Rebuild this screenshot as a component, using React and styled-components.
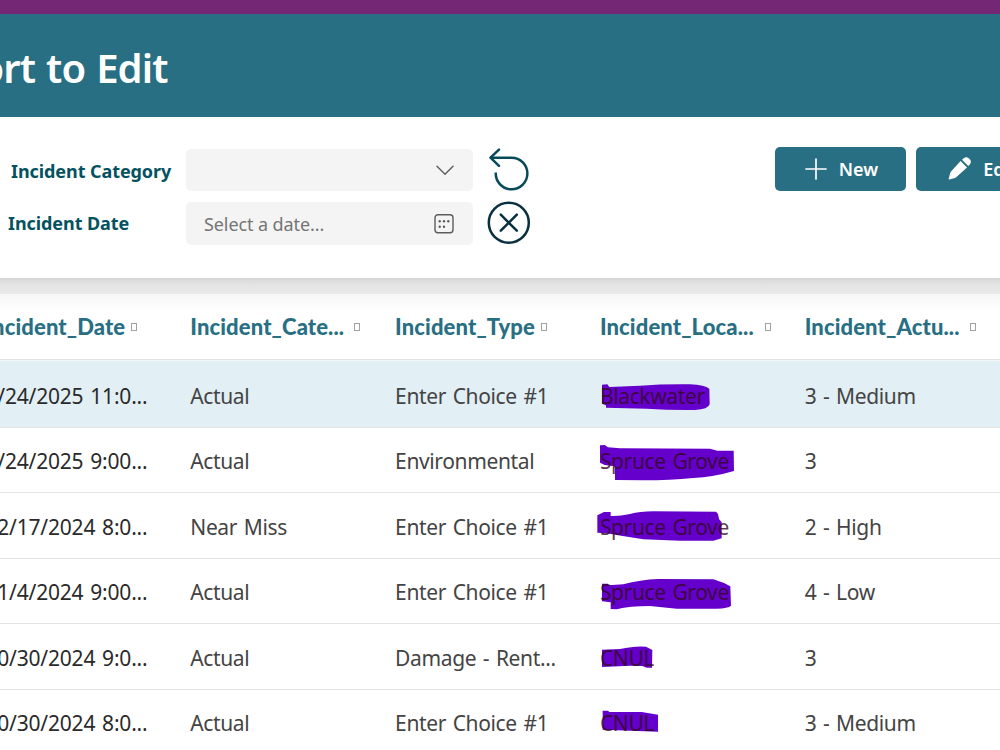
import React, { useState } from 'react';
import styled, { createGlobalStyle } from 'styled-components';

const columns = [
  { key: 'date', label: 'Incident_Date', gap: 6 },
  { key: 'category', label: 'Incident_Cate...', gap: 10 },
  { key: 'type', label: 'Incident_Type', gap: 6 },
  { key: 'location', label: 'Incident_Loca...', gap: 11 },
  { key: 'severity', label: 'Incident_Actu...', gap: 10 },
];

const incidents = [
  {
    date: '1/24/2025 11:0...',
    category: 'Actual',
    type: 'Enter Choice #1',
    location: 'Blackwater',
    severity: '3 - Medium',
    mark: 'M66 68 L82 67 L88 75 L180 71 Q250 66 330 67 Q375 69 388 80 L389 127 Q385 142 345 144 Q270 145 200 140 L78 137 L78 130 L66 125 Z',
  },
  {
    date: '1/24/2025 9:00...',
    category: 'Actual',
    type: 'Environmental',
    location: 'Spruce Grove',
    severity: '3',
    mark: 'M60 55 L74 54 L84 61 L120 64 L390 65 L412 71 L461 71 L462 132 Q400 150 340 153 Q270 160 190 160 L105 159 L105 118 L74 114 L60 107 Z',
  },
  {
    date: '12/17/2024 8:0...',
    category: 'Near Miss',
    type: 'Enter Choice #1',
    location: 'Spruce Grove',
    severity: '2 - High',
    mark: 'M52 67 L72 57 L92 57 L92 69 Q120 70 150 63 Q180 55 220 55 L408 56 L414 63 L417 78 L425 88 L425 136 L400 143 L300 143 L190 139 Q120 128 80 121 L52 119 Z',
  },
  {
    date: '11/4/2024 9:00...',
    category: 'Actual',
    type: 'Enter Choice #1',
    location: 'Spruce Grove',
    severity: '4 - Low',
    mark: 'M66 77 L84 77 L85 82 L130 79 Q180 65 235 63 L400 64 Q430 73 451 85 L453 143 Q445 151 410 152 L290 152 L210 144 Q150 144 110 154 L92 153 L92 133 L66 130 Z',
  },
  {
    date: '10/30/2024 9:0...',
    category: 'Actual',
    type: 'Damage - Rent...',
    location: 'CNUL',
    severity: '3',
    mark: 'M66 77 L120 75 Q165 65 198 68 L217 78 L216 131 L200 131 L187 126 L150 125 L66 129 Z',
  },
  {
    date: '10/30/2024 8:0...',
    category: 'Actual',
    type: 'Enter Choice #1',
    location: 'CNUL',
    severity: '3 - Medium',
    mark: 'M68 65 L84 65 L88 69 L185 69 L234 77 L234 128 L68 122 Z',
  },
];

export default function App() {
  const [selected, setSelected] = useState(0);

  return (
    <Page>
      <GlobalStyle />
      <TopStrip />
      <Header>
        <Title>Report to Edit</Title>
      </Header>

      <FilterBar>
        <Filters>
          <FilterRow>
            <Label $indent={11} $drop={2}>Incident Category</Label>
            <Field $height={42} $drop={0}>
              <span />
              <ChevronIcon />
            </Field>
            <IconButton><UndoIcon /></IconButton>
          </FilterRow>
          <FilterRow>
            <Label $indent={8} $drop={0}>Incident Date</Label>
            <Field $height={43} $drop={2}>
              <Placeholder>Select a date...</Placeholder>
              <CalendarIcon />
            </Field>
            <IconButton><CancelIcon /></IconButton>
          </FilterRow>
        </Filters>
        <Actions>
          <Button>
            <PlusIcon />
            New
          </Button>
          <Button>
            <PencilIcon />
            Edit
          </Button>
        </Actions>
      </FilterBar>

      <Separator />

      <Table>
        <HeadRow>
          {columns.map((col) => (
            <HeadCell key={col.key} $gap={col.gap}>
              {col.label}
              <SortBox />
            </HeadCell>
          ))}
        </HeadRow>
        {incidents.map((row, index) => (
          <Row key={index} $selected={index === selected} onClick={() => setSelected(index)}>
            <DateCell>{row.date}</DateCell>
            <Cell>{row.category}</Cell>
            <Cell>{row.type}</Cell>
            <Cell>
              <Marker viewBox="0 0 510 198"><path d={row.mark} /></Marker>
              <Marked>{row.location}</Marked>
            </Cell>
            <Cell>{row.severity}</Cell>
          </Row>
        ))}
      </Table>
    </Page>
  );
}

const ChevronIcon = () => (
  <svg width="18" height="13" viewBox="0 0 18 13" fill="none" stroke="#5c5c5c" strokeWidth="1.4" strokeLinecap="round" strokeLinejoin="round">
    <path d="M1 3.2 L9 11.3 L17 3.2" />
  </svg>
);

const CalendarIcon = () => (
  <svg width="20" height="20" viewBox="0 0 20 20">
    <rect x="1" y="0.7" width="18" height="18" rx="3" fill="none" stroke="#5c5c5c" strokeWidth="1.4" />
    <g fill="#5c5c5c">
      <circle cx="5.7" cy="7.2" r="1.2" />
      <circle cx="10" cy="7.2" r="1.2" />
      <circle cx="14.3" cy="7.2" r="1.2" />
      <circle cx="5.7" cy="12.8" r="1.2" />
      <circle cx="10" cy="12.8" r="1.2" />
    </g>
  </svg>
);

const UndoIcon = () => (
  <svg width="44" height="44" viewBox="0 0 44 44" fill="none" stroke="#074a5a" strokeWidth="2.5" strokeLinecap="round" strokeLinejoin="round">
    <path d="M12 1.6 L3.5 9.7 L12 17.8" />
    <path d="M3.5 9.7 H24.5 A15.8 15.8 0 1 1 8.8 24.5" strokeLinecap="butt" />
  </svg>
);

const CancelIcon = () => (
  <svg width="44" height="44" viewBox="0 0 44 44" fill="none" stroke="#08303f" strokeWidth="2.5" strokeLinecap="round">
    <circle cx="21.8" cy="21.7" r="20" />
    <path d="M13.8 13.7 L29.8 29.7 M29.8 13.7 L13.8 29.7" />
  </svg>
);

const PlusIcon = () => (
  <svg width="22" height="22" viewBox="0 0 22 22" stroke="#fff" strokeWidth="1.7" strokeLinecap="round">
    <path d="M11 1 V21 M1 11 H21" />
  </svg>
);

const PencilIcon = () => (
  <svg width="23" height="23" viewBox="0 0 23 23" fill="#fff">
    <path d="M12.6 4 L19 10.4 L8.2 20.2 Q7.6 20.8 6.8 21 L1.3 22.4 Q0.5 22.5 0.7 21.7 L2.2 16 Q2.4 15.2 3 14.6 Z" />
    <path d="M14 2.7 L15.5 1.4 A4.4 4.4 0 0 1 21.6 7.7 L20.3 9 Z" />
  </svg>
);

const GlobalStyle = createGlobalStyle`
  * {
    box-sizing: border-box;
  }
  body {
    margin: 0;
    overflow: hidden;
    background: #fff;
    font-family: 'Noto Sans', 'Open Sans', sans-serif;
  }
`;

const Page = styled.div`
  width: 1000px;
  height: 750px;
  overflow: hidden;
  background: #fff;
`;

const TopStrip = styled.div`
  height: 14px;
  background: #742774;
`;

const Header = styled.header`
  display: flex;
  align-items: center;
  height: 103px;
  background: #286f84;
`;

const Title = styled.h1`
  display: flex;
  justify-content: flex-end;
  width: 167.5px;
  margin: 0;
  padding-top: 3px;
  color: #fff;
  font-size: 40px;
  font-weight: 600;
  letter-spacing: -0.9px;
  word-spacing: 1.5px;
  white-space: nowrap;
`;

const FilterBar = styled.section`
  display: flex;
  height: 161px;
  padding-top: 30px;
`;

const Filters = styled.div`
  display: flex;
  flex-direction: column;
  flex-shrink: 0;
  gap: 8px;
  width: 774.5px;
`;

const FilterRow = styled.div`
  display: flex;
  align-items: center;
  height: 45px;
`;

const Label = styled.label`
  width: 186px;
  padding-top: ${(props) => props.$drop}px;
  padding-left: ${(props) => props.$indent}px;
  color: #04525f;
  font-size: 18px;
  font-weight: 700;
  letter-spacing: -0.08px;
  white-space: nowrap;
`;

const Field = styled.div`
  display: flex;
  align-items: center;
  justify-content: space-between;
  width: 287px;
  height: ${(props) => props.$height}px;
  margin-top: ${(props) => props.$drop}px;
  padding: 0 19px 0 18px;
  background: #f4f4f4;
  border-radius: 5px;
`;

const Placeholder = styled.span`
  padding-top: 1px;
  color: #757575;
  font-size: 18px;
  letter-spacing: -0.1px;
`;

const IconButton = styled.button`
  display: flex;
  margin-left: 14px;
  padding: 0;
  border: 0;
  background: none;
`;

const Actions = styled.div`
  display: flex;
  gap: 10px;
`;

const Button = styled.button`
  display: flex;
  flex-shrink: 0;
  align-items: center;
  justify-content: center;
  gap: 12px;
  width: 131px;
  height: 43.5px;
  padding: 0 0 0 3px;
  border: 0;
  border-radius: 5px;
  background: #286f84;
  color: #fff;
  font-family: inherit;
  font-size: 18px;
  font-weight: 600;
`;

const Separator = styled.div`
  height: 16px;
  background: linear-gradient(#d6d6d6, #e4e4e4 40%, #e9e9e9);
`;

const Table = styled.div`
  width: 1040px;
  margin-left: -14.5px;
`;

const HeadRow = styled.div`
  display: grid;
  grid-template-columns: repeat(5, 204.8px);
  height: 67px;
  border-bottom: 1px solid #f3f7f9;
  background: linear-gradient(#f6f6f6, #fff 18px);
  box-shadow: inset 0 -1px #e2e2e2;
`;

const HeadCell = styled.div`
  display: flex;
  align-items: center;
  gap: ${(props) => props.$gap}px;
  padding-bottom: 1px;
  color: #286f84;
  font-family: Lato, sans-serif;
  font-size: 22px;
  font-weight: 900;
  letter-spacing: 0.12px;
  white-space: nowrap;
`;

const SortBox = styled.span`
  width: 6px;
  height: 8px;
  border: 1px solid #a3a19b;
`;

const Row = styled.div`
  display: grid;
  grid-template-columns: repeat(5, 204.8px);
  height: 65.5px;
  border-bottom: 1.5px solid #e4e4e4;
  background: ${(props) => (props.$selected ? '#e2eff5' : '#fff')};

  &:nth-child(2) {
    height: 66.5px;
    padding-top: 1px;
  }
`;

const Cell = styled.div`
  position: relative;
  display: flex;
  align-items: center;
  padding-top: 3px;
  color: #444;
  font-size: 21px;
  letter-spacing: -0.37px;
  word-spacing: 1.6px;
  white-space: nowrap;
`;

const DateCell = styled(Cell)`
  color: #2a2a2a;
  letter-spacing: -0.2px;
`;

// highlighter stroke lying over the location cell
const Marker = styled.svg`
  position: absolute;
  top: -0.5px;
  left: -20.4px;
  width: 170px;
  height: 66px;
  fill: #6500cc;
`;

const Marked = styled.span`
  position: relative;
  color: rgba(50, 8, 26, 0.8);
`;
